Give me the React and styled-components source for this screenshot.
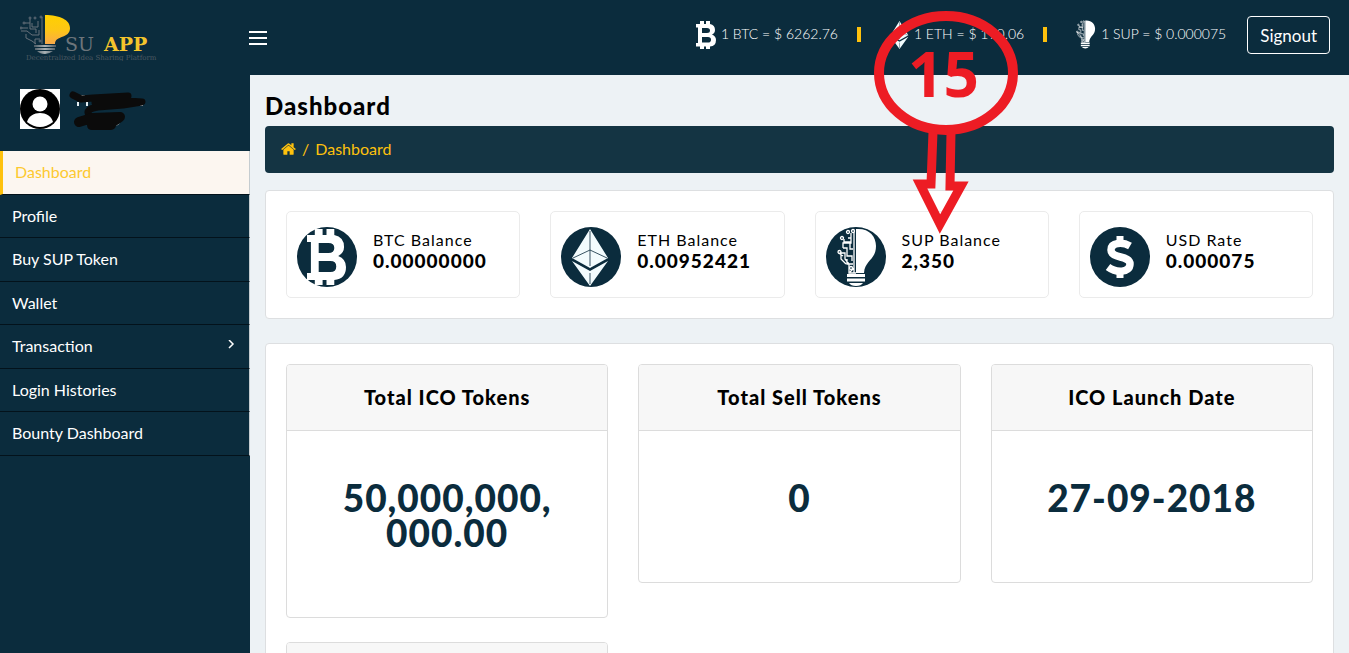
import React from "react";
import styled, { createGlobalStyle } from "styled-components";

const navy = "#0b2c3d";
const gold = "#fec10d";

const Global = createGlobalStyle`
  * { box-sizing: border-box; }
  body { margin: 0; background: #edf2f5; color: #000; font-family: Lato, "Liberation Sans", sans-serif; font-size: 16px; }
  h1, h2, p, ul { margin: 0; padding: 0; font-weight: inherit; }
  a { color: inherit; text-decoration: none; }
  button { font: inherit; cursor: pointer; }
`;

const Page = styled.div`
  position: relative;
  display: flex;
  flex-direction: column;
  height: 100vh;
  overflow: hidden;
`;
const Header = styled.header`
  flex: none;
  display: flex;
  align-items: center;
  height: 75px;
  padding: 0 19px 0 20px;
  background: ${navy};
  color: #fff;
`;
const Brand = styled.a`
  display: block;
  flex: none;
  width: 229px;
  svg { display: block; }
`;
const MenuButton = styled.button`
  display: grid;
  gap: 4px;
  width: 18px;
  padding: 0;
  border: 0;
  background: none;
  span { height: 2px; background: #fff; }
`;
const Rates = styled.ul`
  display: flex;
  align-items: center;
  margin-left: auto;
  margin-right: 21px;
  padding-bottom: 6px;
  list-style: none;
  font-size: 14px;
  line-height: 20px;
`;
const Rate = styled.li`
  display: flex;
  align-items: center;
  gap: 5px;
  white-space: nowrap;
  & + &::before {
    content: "";
    width: 4px;
    height: 15px;
    margin: 0 24px 0 19px;
    background: ${gold};
  }
  svg { display: block; flex: none; }
  span { font-weight: 300; padding-bottom: 1px; }
`;
const Signout = styled.button`
  height: 38px;
  padding: 0 12px;
  margin-bottom: 5px;
  border: 1px solid #fff;
  border-radius: 4px;
  background: none;
  color: #fff;
  font-size: 17px;
`;
const Body = styled.div`
  flex: 1;
  min-height: 0;
  display: flex;
`;
const Sidebar = styled.aside`
  flex: none;
  width: 250px;
  background: ${navy};
  color: #fff;
`;
const User = styled.div`
  display: flex;
  gap: 8px;
  height: 76px;
  padding: 14px 20px 0;
`;
const NavItem = styled.a`
  display: flex;
  align-items: center;
  justify-content: space-between;
  padding: 10px 14px 10px 12px;
  border-right: 1px solid #c5ccd0;
  border-bottom: 1px solid #03121b;
  border-left: ${(p) => (p.$active ? `3px solid ${gold}` : "0")};
  background: ${(p) => (p.$active ? "#fcf6f0" : navy)};
  color: ${(p) => (p.$active ? "#fdc92f" : "#fff")};
  line-height: 1.41;
`;
const Main = styled.main`
  flex: 1;
  min-width: 0;
  padding: 16px 15px 0;
`;
const Title = styled.h1`
  font-size: 24px;
  line-height: 30px;
  font-weight: 900;
  letter-spacing: 1px;
`;
const Breadcrumb = styled.nav`
  display: flex;
  align-items: center;
  gap: 6px;
  height: 47px;
  margin: 5px 0 17px;
  padding: 0 16px 2px;
  border-radius: 4px;
  background: #143443;
  color: ${gold};
  svg { display: block; }
`;
const Panel = styled.section`
  display: grid;
  grid-template-columns: repeat(${(p) => p.$columns}, 1fr);
  align-items: start;
  gap: 24px 30px;
  margin-bottom: 24px;
  padding: 20px;
  border: 1px solid #dddfe1;
  border-radius: 4px;
  background: #fff;
`;
const Balance = styled.article`
  display: flex;
  gap: 16px;
  height: 87px;
  padding: 15px 10px;
  border: 1px solid #ebebeb;
  border-radius: 5px;
  letter-spacing: 1px;
  svg { flex: none; }
`;
const BalanceText = styled.div`
  padding-top: 2px;
  p { font-size: 16px; line-height: 22px; }
  strong { display: block; font-size: 19px; line-height: 20px; font-weight: 900; }
`;
const Stat = styled.article`
  border: 1px solid #dcdcdc;
  border-radius: 4px;
  overflow: hidden;
  text-align: center;
  font-weight: 900;
  letter-spacing: 1px;
  h2 {
    height: 66px;
    border-bottom: 1px solid #dcdcdc;
    background: #f7f7f7;
    font-size: 20px;
    line-height: 64px;
  }
  p {
    padding: 49px 20px 67px;
    color: ${navy};
    font-size: 37px;
    line-height: 35px;
  }
`;
const Annotation = styled.svg`
  position: absolute;
  top: 0;
  left: 870px;
  pointer-events: none;
  text { font: 700 62px "Open Sans", sans-serif; }
`;

const BtcShape = ({ fill = "#fff" }) => (
  <path
    fill={fill}
    fillRule="evenodd"
    d="M0 3H4V0H8V3H10V0H14V3Q19 4 19 9Q19 12 16 13.500Q20 15 20 19Q20 25 14 25.500V28H10V25.500H8V28H4V25.500H0V22H2V6.500H0ZM6 7V12H11Q14 12 14 9.500Q14 7 11 7ZM6 16V21.500H12Q15 21.500 15 18.700Q15 16 12 16Z"
  />
);
const EthShape = ({ line = navy }) => (
  <g>
    <path fill="#f2fbfd" d="M18 0L36 29L18 39L0 29ZM0 32L18 42L36 32L18 57Z" />
    <path d="M18 2V37M1 29L18 21L35 29M18 44V55" fill="none" stroke={line} strokeWidth="1" opacity=".8" />
  </g>
);
/* Light bulb: circuit tracks on the left half, solid glass on the right. */
const BulbShape = ({ track = "#fff", glass = "#fff", base = "#fff" }) => (
  <g>
    <path d="M18 1C31 0 38 8 38 18C38 32 27 32 26 45H18Z" fill={glass} />
    <g fill="none" stroke={track} strokeWidth="1.3">
      <path d="M16 45V4M13 5V15H5V20M6 11V14H12V21H15M2 25H7V31L11 36V45H18M5 20H9V28H14V33M5 28L1 25M9 31V36H15M10 10H13M3 25V31L8 36M12 44L16 40" />
      <circle cx="15" cy="3" r="1.500" />
      <circle cx="10" cy="4" r="1.500" />
      <circle cx="4" cy="10" r="1.500" />
      <circle cx="1.500" cy="24" r="1.500" />
      <circle cx="13" cy="40" r="1.500" />
    </g>
    <path d="M9 46H27V49H9ZM9 50.500H27V53.500H9ZM11 55H25Q23 58 18 58Q13 58 11 55Z" fill={base} />
  </g>
);

const Logo = () => (
  <svg width="140" height="46" viewBox="0 0 140 46" role="img" aria-label="PSUAPP Decentralized Idea Sharing Platform">
    <defs>
      <linearGradient id="glass" x1="0" y1="0" x2="0" y2="1">
        <stop offset="0" stopColor="#fed000" />
        <stop offset=".5" stopColor="#fdc714" />
        <stop offset="1" stopColor="#f9a94a" />
      </linearGradient>
      <linearGradient id="base" x1="0" y1="0" x2="1" y2="0">
        <stop offset="0" stopColor="#4b5a64" />
        <stop offset=".5" stopColor="#aab2b5" />
        <stop offset="1" stopColor="#4b5a64" />
      </linearGradient>
    </defs>
    <path d="M25 0C40 0 50 5 50 13C50 24 35 20 35 29H25Z" fill="url(#glass)" />
    <g fill="none" stroke="#66707a" strokeWidth="1">
      <path d="M22 29V2M18 6V12H12V8M5 8H10V14H16V18M2 13H8M1 16H7L12 20M6 19V23L12 26L16 29M12 20H19V15M10 4V8M15 29V24H20" />
      <circle cx="21" cy="2" r="1" />
      <circle cx="15" cy="3" r="1" />
      <circle cx="10" cy="3" r="1" />
      <circle cx="4" cy="8" r="1" />
      <circle cx="1" cy="13" r="1" />
      <circle cx="20" cy="26" r="1" />
    </g>
    <path d="M14 30H36V32H14ZM15 33H35V35H15ZM17 36H33Q29 39 25 39Q20 39 17 36Z" fill="url(#base)" />
    <text x="45" y="36" fontFamily="DejaVu Serif, serif" fontSize="19" fill="#6d757b">SU</text>
    <text x="84" y="36" fontFamily="DejaVu Serif, serif" fontSize="19" fontWeight="700" fill="#f4c42c">APP</text>
    <text x="6" y="45" fontFamily="DejaVu Serif, serif" fontSize="7" fill="#4c5962">Decentralized Idea Sharing Platform</text>
  </svg>
);

const HomeIcon = () => (
  <svg width="15" height="16" viewBox="0 0 1664 1792" fill="currentColor" aria-hidden="true">
    <path d="M1408 992v480q0 26-19 45t-45 19H960v-384H704v384H320q-26 0-45-19t-19-45V992q0-1 .5-3t.5-3l575-474 575 474q1 2 1 6zm223-69l-62 74q-8 9-21 11h-3q-13 0-21-7L832 424 140 1001q-12 8-24 7-13-2-21-11l-62-74q-8-10-7-23.500t11-21.500l719-599q32-26 76-26t76 26l244 204V288q0-14 9-23t23-9h192q14 0 23 9t9 23v408l219 182q10 8 11 21.500t-7 23.500z" />
  </svg>
);

const Disc = ({ children }) => (
  <svg width="60" height="60" viewBox="0 0 60 60" aria-hidden="true">
    <circle cx="30" cy="30" r="30" fill={navy} />
    {children}
  </svg>
);

const rates = [
  { text: "1 BTC = $ 6262.76", icon: <svg width="20" height="28" viewBox="0 0 20 28"><BtcShape /></svg> },
  { text: "1 ETH = $ 190.06", icon: <svg width="19" height="28" viewBox="0 0 36 57"><EthShape /></svg> },
  { text: "1 SUP = $ 0.000075", icon: <svg width="20" height="29" viewBox="0 0 39 59"><BulbShape /></svg> },
];
const balances = [
  { label: "BTC Balance", value: "0.00000000", icon: <g transform="translate(10 2) scale(1.95 2)"><BtcShape /></g> },
  { label: "ETH Balance", value: "0.00952421", icon: <g transform="translate(11 2)"><EthShape /></g> },
  { label: "SUP Balance", value: "2,350", icon: <g transform="translate(12 1)"><BulbShape /></g> },
  {
    label: "USD Rate",
    value: "0.000075",
    icon: (
      <g fill="none" stroke="#fff">
        <path d="M30 9V17M30 44V51" strokeWidth="7" />
        <path d="M40 19C33 15 21 15 21 23C21 32 40 28 40 37C40 46 26 46 18 40" strokeWidth="7.500" />
      </g>
    ),
  },
];
const links = ["Dashboard", "Profile", "Buy SUP Token", "Wallet", "Transaction", "Login Histories", "Bounty Dashboard"];
const stats = [
  { title: "Total ICO Tokens", value: <>50,000,000,<br />000.00</> },
  { title: "Total Sell Tokens", value: "0" },
  { title: "ICO Launch Date", value: "27-09-2018" },
];

export default function App() {
  return (
    <Page>
      <Global />
      <Header>
        <Brand href="#"><Logo /></Brand>
        <MenuButton aria-label="Toggle menu"><span /><span /><span /></MenuButton>
        <Rates>
          {rates.map((r) => (
            <Rate key={r.text}>{r.icon}<span>{r.text}</span></Rate>
          ))}
        </Rates>
        <Signout>Signout</Signout>
      </Header>
      <Body>
        <Sidebar>
          <User>
            <svg width="40" height="40" viewBox="0 0 40 40" aria-hidden="true">
              <rect width="40" height="40" fill="#fff" />
              <circle cx="20" cy="20" r="20" />
              <circle cx="20" cy="15" r="7.500" fill="#fff" />
              <path d="M7 33C10 21 30 21 33 33Q20 43 7 33Z" fill="#fff" />
            </svg>
            <svg width="80" height="44" viewBox="0 0 80 44" aria-hidden="true">
              <path d="M10 13V17M19 13V17M13 7H17M33 8H41M50 5H56M69 16H75M48 36L51 34" stroke="#e4edf2" strokeWidth="2" />
              <g fill="none" stroke="#0b0b0b" strokeLinecap="round" strokeLinejoin="round">
                <path d="M5 6L13 10L25 9L60 7M27 14L45 11L74 13L55 16L30 18Q17 20 21 26" strokeWidth="7" />
                <path d="M11 33L24 29L52 28L45 33L24 36L43 36" strokeWidth="10" />
              </g>
            </svg>
          </User>
          <nav>
            {links.map((name, i) => (
              <NavItem key={name} href="#" $active={i === 0}>
                {name}
                {name === "Transaction" && (
                  <svg width="7" height="12" viewBox="0 0 7 12" aria-hidden="true">
                    <path d="M1 0L5 4L1 8" fill="none" stroke="#fff" strokeWidth="1.500" />
                  </svg>
                )}
              </NavItem>
            ))}
          </nav>
        </Sidebar>
        <Main>
          <Title>Dashboard</Title>
          <Breadcrumb aria-label="Breadcrumb">
            <a href="#" aria-label="Home"><HomeIcon /></a>
            <span>/</span>
            <a href="#">Dashboard</a>
          </Breadcrumb>
          <Panel $columns={4}>
            {balances.map((b) => (
              <Balance key={b.label}>
                <Disc>{b.icon}</Disc>
                <BalanceText><p>{b.label}</p><strong>{b.value}</strong></BalanceText>
              </Balance>
            ))}
          </Panel>
          <Panel $columns={3}>
            {stats.map((s) => (
              <Stat key={s.title}><h2>{s.title}</h2><p>{s.value}</p></Stat>
            ))}
            <Stat><h2 /><p /></Stat>
          </Panel>
        </Main>
      </Body>
      <Annotation width="155" height="240" viewBox="0 0 155 240">
        <g fill="none" stroke="#ed1c24">
          <ellipse cx="76" cy="73" rx="67" ry="57" strokeWidth="10" />
          <path d="M63 132L61 184H50L70 224L91 186H80L81 132" strokeWidth="9" />
        </g>
        <text x="38" y="97" fill="#ed1c24">15</text>
      </Annotation>
    </Page>
  );
}
